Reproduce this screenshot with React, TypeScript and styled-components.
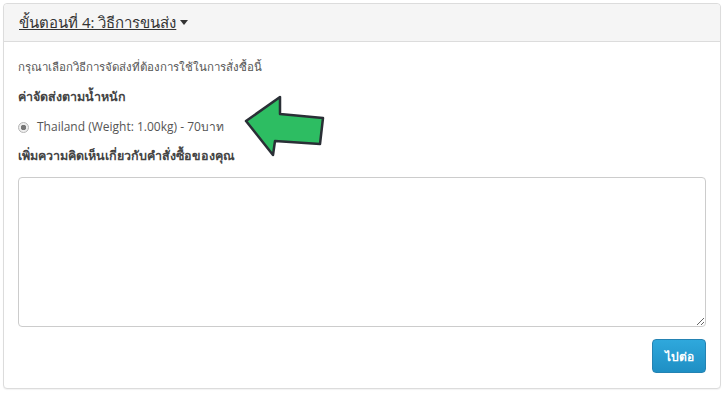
import * as React from 'react';
import styled, { createGlobalStyle } from 'styled-components';

const Global = createGlobalStyle`
    body {
        margin: 0;
        background: #fff;
        font-family: "Open Sans", "Noto Sans", sans-serif;
        color: #333;
    }
`;

function Arrow() {
    return (
        <ArrowSvg width="90" height="70" viewBox="0 0 90 70">
            <path
                d="M3 28 L37 4 L37 21 L80 25 L77 51 L32 48 L30 62 Z"
                fill="#2dbd62"
                stroke="#2a2f36"
                strokeWidth="2.5"
                strokeLinejoin="round"
            />
        </ArrowSvg>
    );
}

export default function App() {
    return (
        <Page>
            <Global />
            <Panel>
                <Header>
                    <Title>
                        ขั้นตอนที่ 4: วิธีการขนส่ง <Caret />
                    </Title>
                </Header>
                <Body>
                    <Hint>กรุณาเลือกวิธีการจัดส่งที่ต้องการใช้ในการสั่งซื้อนี้</Hint>
                    <Label>ค่าจัดส่งตามน้ำหนัก</Label>
                    <RadioRow>
                        <Radio />
                        <span>Thailand (Weight: 1.00kg) - 70บาท</span>
                        <Arrow />
                    </RadioRow>
                    <Label>เพิ่มความคิดเห็นเกี่ยวกับคำสั่งซื้อของคุณ</Label>
                    <Comment />
                    <Actions>
                        <Button>ไปต่อ</Button>
                    </Actions>
                </Body>
            </Panel>
        </Page>
    );
}

const Page = styled.div`
    padding: 3px 4px 6px 3px;
`;

const Panel = styled.div`
    border: 1px solid #dcdcdc;
    border-radius: 4px;
    box-shadow: 0 1px 1px rgba(0, 0, 0, 0.05);
    background: #fff;
`;

const Header = styled.div`
    height: 37px;
    display: flex;
    align-items: center;
    padding: 0 15px;
    background: #f5f5f5;
    border-bottom: 1px solid #dcdcdc;
    border-radius: 4px 4px 0 0;
`;

const Title = styled.span`
    font-size: 15px;
    color: #333;
    text-decoration: underline;
    display: inline-flex;
    align-items: center;
`;

const Caret = styled.span`
    display: inline-block;
    width: 0;
    height: 0;
    margin-left: 4px;
    border-top: 5px solid #333;
    border-left: 4px solid transparent;
    border-right: 4px solid transparent;
`;

const Body = styled.div`
    padding: 16px 14px 15px 14px;
    font-size: 12px;
    line-height: 18px;
`;

const Hint = styled.p`
    margin: 0 0 12px;
    font-size: 11.5px;
    color: #555;
`;

const Label = styled.div`
    font-weight: bold;
    font-size: 12.5px;
    color: #444;
    margin-bottom: 12px;
`;

const RadioRow = styled.div`
    position: relative;
    display: flex;
    align-items: center;
    gap: 8px;
    color: #555;
    font-size: 12px;
    margin: 0 0 11px;
    height: 18px;
`;

const Radio = styled.span`
    width: 11px;
    height: 11px;
    border-radius: 50%;
    border: 1px solid #b5b5b5;
    background: radial-gradient(circle, #777 0 2.5px, #eee 3px);
    box-sizing: border-box;
`;

const ArrowSvg = styled.svg`
    position: absolute;
    left: 225px;
    top: -25px;
`;

const Comment = styled.textarea`
    display: block;
    width: 100%;
    height: 150px;
    box-sizing: border-box;
    margin-top: 12px;
    border: 1px solid #ccc;
    border-radius: 4px;
    resize: vertical;
`;

const Actions = styled.div`
    display: flex;
    justify-content: flex-end;
    margin-top: 12px;
`;

const Button = styled.button`
    width: 54px;
    height: 34px;
    border: 1px solid #2483b3;
    border-radius: 4px;
    background: linear-gradient(#2fa8dc, #1f8fc4);
    color: #fff;
    font-family: "Open Sans", sans-serif;
    font-size: 12px;
    font-weight: bold;
    cursor: pointer;
`;
